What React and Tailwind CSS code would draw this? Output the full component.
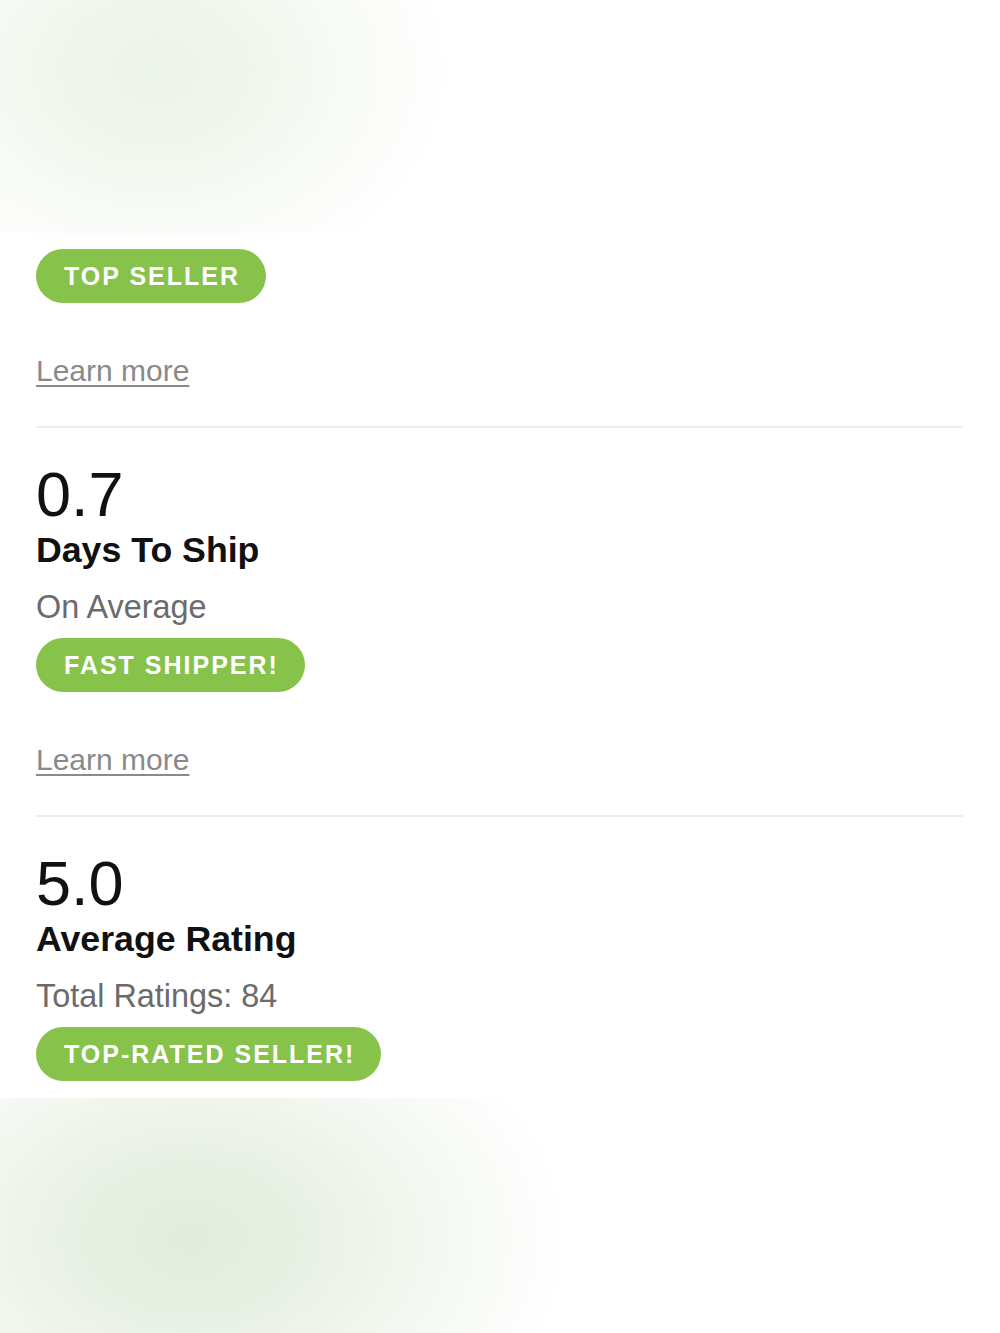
export default function App() {
  const font = { fontFamily: '"Liberation Sans", Arial, Helvetica, sans-serif' };
  const Badge = ({ children }) => (
    <div className="inline-flex h-[54px] items-center rounded-full bg-[#87c24b] pl-[28px] pr-[26px] text-[25px] font-bold leading-none tracking-[2px] text-white">
      {children}
    </div>
  );
  const Learn = () => (
    <div className="mt-[50px] text-[30px] leading-[36px] text-[#8a8a8a] underline decoration-[2px] underline-offset-[4px]">
      Learn more
    </div>
  );
  const Divider = () => <div className="mt-[37px] h-[2px] bg-[#eeeeee]" />;
  const Stat = ({ value, title, sub, badge }) => (
    <div className="flex flex-col items-start">
      <div className="mt-[36px] text-[63px] leading-[61px] text-[#111111]">{value}</div>
      <div className="mt-[4px] text-[35.7px] font-bold leading-[42px] text-[#111111]">{title}</div>
      <div className="mt-[17px] text-[32.4px] leading-[38px] text-[#6b6b6b]">{sub}</div>
      <div className="mt-[12px]">
        <Badge>{badge}</Badge>
      </div>
    </div>
  );
  return (
    <div className="min-h-[1333px] w-[1000px] bg-white" style={font}>
      <div className="h-[233px] bg-[radial-gradient(ellipse_300px_230px_at_155px_70px,#ecf3e7_0%,#f0f6ec_30%,#f7faf5_60%,#ffffff_100%)]" />
      <div className="flex flex-col pl-[36px] pr-[37px] pb-[17px]">
        <div className="mt-[16px] flex flex-col items-start">
          <Badge>TOP SELLER</Badge>
          <Learn />
        </div>
        <Divider />
        <Stat value="0.7" title="Days To Ship" sub="On Average" badge="FAST SHIPPER!" />
        <div className="flex flex-col items-start">
          <Learn />
        </div>
        <Divider />
        <Stat value="5.0" title="Average Rating" sub="Total Ratings: 84" badge="TOP-RATED SELLER!" />
      </div>
      <div className="h-[235px] bg-[radial-gradient(ellipse_380px_270px_at_190px_140px,#e2ecdc_0%,#e8f0e4_30%,#f3f7f0_60%,#ffffff_100%)]" />
    </div>
  );
}
